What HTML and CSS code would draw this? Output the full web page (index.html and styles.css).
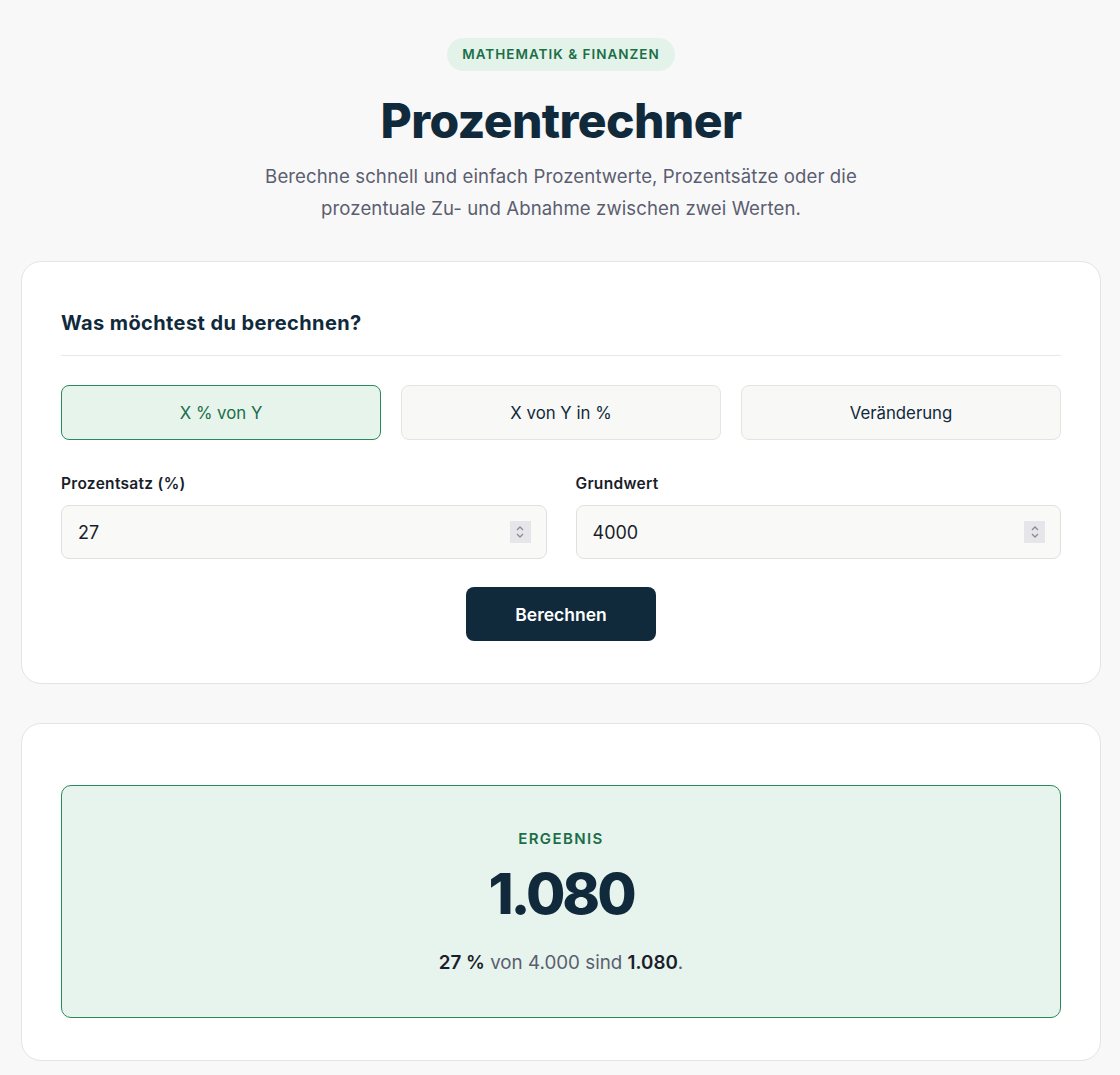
FILE: index.html
```html
<!DOCTYPE html>
<html lang="de">
<head>
<meta charset="utf-8">
<title>Prozentrechner</title>
<link rel="stylesheet" href="styles.css">
</head>
<body>
<main class="page">
  <header class="hero">
    <span class="badge">MATHEMATIK &amp; FINANZEN</span>
    <h1 class="title">Prozentrechner</h1>
    <p class="subtitle">Berechne schnell und einfach Prozentwerte, Prozentsätze oder die<br>prozentuale Zu- und Abnahme zwischen zwei Werten.</p>
  </header>

  <section class="card calc">
    <h2 class="card-title">Was möchtest du berechnen?</h2>
    <div class="tabs">
      <button class="tab active">X % von Y</button>
      <button class="tab">X von Y in %</button>
      <button class="tab">Veränderung</button>
    </div>
    <div class="fields">
      <div class="field">
        <label class="label">Prozentsatz (%)</label>
        <div class="input">
          <span class="value">27</span>
          <span class="spinner"><svg width="12" height="16" viewBox="0 0 12 16"><path d="M3 6 L6 3 L9 6" fill="none" stroke="#8a8a96" stroke-width="1.3"/><path d="M3 10 L6 13 L9 10" fill="none" stroke="#8a8a96" stroke-width="1.3"/></svg></span>
        </div>
      </div>
      <div class="field">
        <label class="label">Grundwert</label>
        <div class="input">
          <span class="value">4000</span>
          <span class="spinner"><svg width="12" height="16" viewBox="0 0 12 16"><path d="M3 6 L6 3 L9 6" fill="none" stroke="#8a8a96" stroke-width="1.3"/><path d="M3 10 L6 13 L9 10" fill="none" stroke="#8a8a96" stroke-width="1.3"/></svg></span>
        </div>
      </div>
    </div>
    <div class="actions">
      <button class="btn">Berechnen</button>
    </div>
  </section>

  <section class="card result-card">
    <div class="result">
      <div class="result-label">ERGEBNIS</div>
      <div class="result-value">1.080</div>
      <p class="result-text"><strong>27 %</strong> von 4.000 sind <strong>1.080</strong>.</p>
    </div>
  </section>
</main>
</body>
</html>
```

FILE: styles.css
```css
* { box-sizing: border-box; }
html, body { margin: 0; padding: 0; }
body {
  background: #f8f8f8;
  font-family: "Inter", "Noto Sans", sans-serif;
  color: #102a3c;
}
.page {
  max-width: 1082px;
  margin: 0 auto;
  padding: 38px 0 15px 2px;
}
.hero {
  display: flex;
  flex-direction: column;
  align-items: center;
  text-align: center;
}
.badge {
  display: inline-block;
  background: #e3f3ea;
  color: #1b6e47;
  font-size: 13.5px;
  font-weight: 600;
  letter-spacing: 1px;
  height: 33px;
  line-height: 33px;
  padding: 0 15px;
  border-radius: 17px;
}
.title {
  margin: 22px 0 0;
  font-size: 48px;
  line-height: 56px;
  font-weight: 800;
  letter-spacing: -0.6px;
  color: #102a3c;
}
.subtitle {
  margin: 11px 0 0;
  font-size: 18.6px;
  line-height: 32px;
  color: #5b5e70;
  letter-spacing: 0.1px;
}
.card {
  background: #fff;
  border: 1px solid #e4e4e2;
  border-radius: 20px;
  padding: 40px 39px 42px;
}
.calc { margin-top: 37px; padding-top: 47px; }
.card-title {
  margin: 0;
  font-size: 20px;
  font-weight: 700;
  color: #102a3c;
  line-height: 28px;
  padding-bottom: 18px;
  border-bottom: 1px solid #e8e8e6;
  letter-spacing: 0.4px;
}
.tabs {
  margin-top: 29px;
  display: grid;
  grid-template-columns: repeat(3, 1fr);
  gap: 20px;
}
.tab {
  height: 55px;
  border: 1px solid #e4e4e0;
  background: #f8f8f6;
  border-radius: 8px;
  font-family: inherit;
  font-size: 16.8px;
  color: #102a3c;
  cursor: pointer;
}
.tab.active {
  background: #e6f4ec;
  border-color: #2a8a5c;
  color: #1b6e47;
}
.fields {
  margin-top: 34px;
  display: grid;
  grid-template-columns: 1fr 1fr;
  gap: 29px;
}
.label {
  display: block;
  font-size: 15.5px;
  font-weight: 600;
  color: #1a1e2a;
  line-height: 20px;
  margin-bottom: 11px;
  letter-spacing: 0.3px;
}
.input {
  height: 54px;
  border: 1px solid #e0e0dc;
  background: #f9f9f7;
  border-radius: 8px;
  display: flex;
  align-items: center;
  justify-content: space-between;
  padding: 0 15px 0 16px;
}
.value { font-size: 18px; color: #1a1e2a; }
.spinner {
  width: 21px;
  height: 22px;
  background: #e6e6ea;
  display: flex;
  align-items: center;
  justify-content: center;
}
.actions {
  margin-top: 28px;
  display: flex;
  justify-content: center;
}
.btn {
  width: 190px;
  height: 54px;
  background: #102a3c;
  color: #fff;
  border: 0;
  border-radius: 8px;
  font-family: inherit;
  font-size: 17.5px;
  font-weight: 600;
  cursor: pointer;
}
.result-card { margin-top: 39px; padding-top: 61px; }
.result {
  background: #e7f4ed;
  border: 1px solid #2a8a5c;
  border-radius: 10px;
  padding: 42px 20px 41px;
  text-align: center;
}
.result-label {
  font-size: 15px;
  font-weight: 600;
  color: #1b6e47;
  letter-spacing: 1.4px;
  line-height: 22px;
}
.result-value {
  margin-top: 8px;
  font-size: 57px;
  font-weight: 800;
  line-height: 72px;
  letter-spacing: -3px;
  color: #102a3c;
}
.result-text {
  margin: 20px 0 0;
  font-size: 18.8px;
  line-height: 26px;
  color: #5b5e70;
}
.result-text strong { color: #1a1e2a; font-weight: 600; }
```
